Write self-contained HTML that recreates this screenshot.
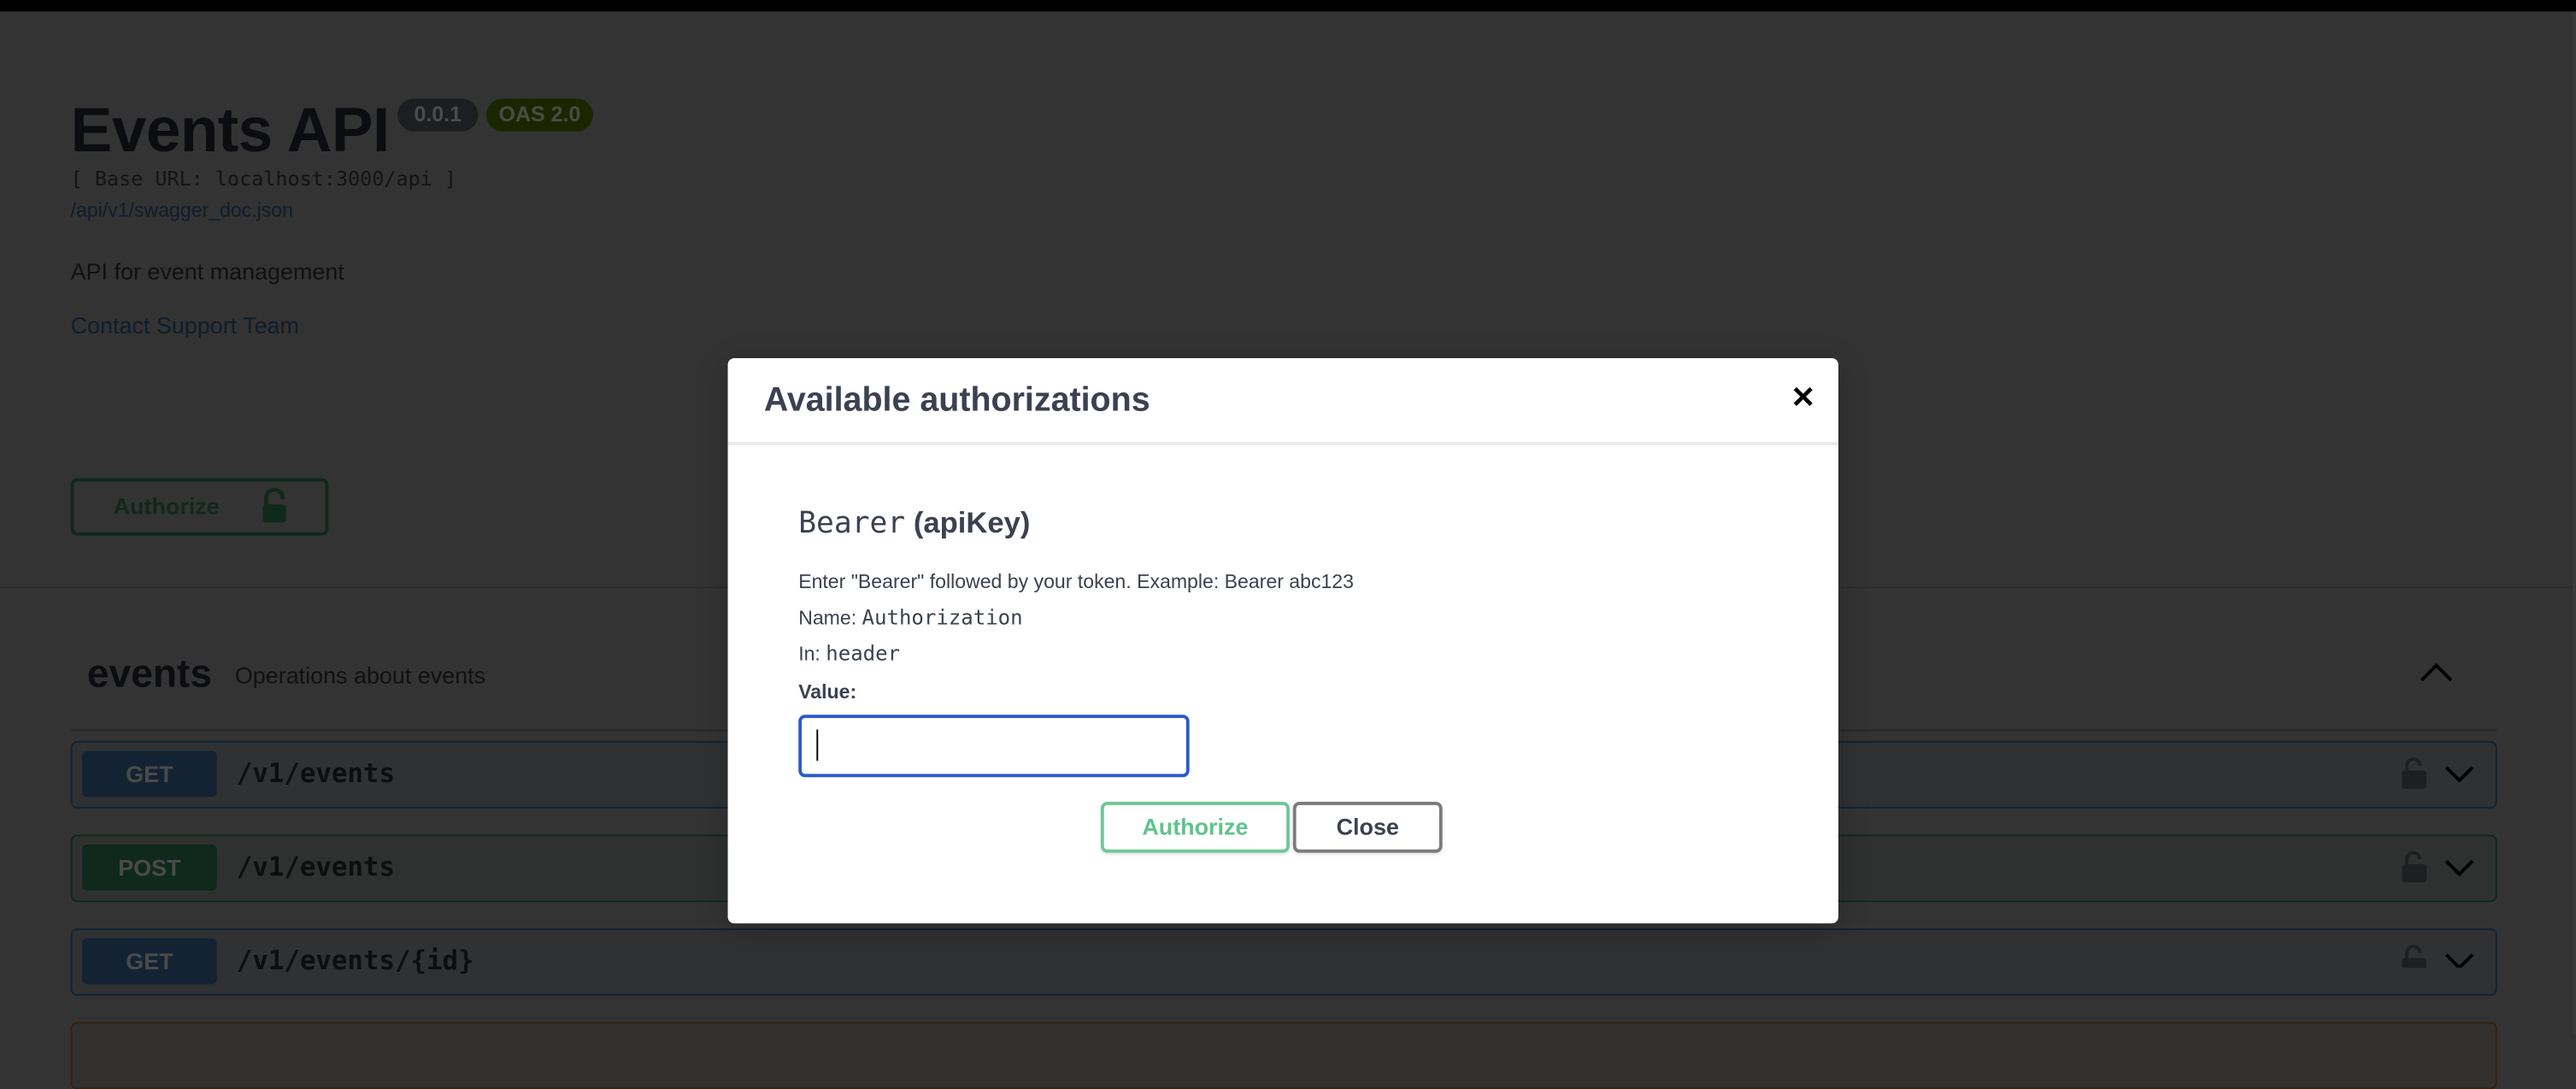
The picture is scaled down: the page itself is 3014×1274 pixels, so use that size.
<!DOCTYPE html>
<html><head><meta charset="utf-8">
<style>
html,body{margin:0;padding:0;width:3014px;height:1210px;overflow:hidden;background:#333;}
#w{position:absolute;left:0;top:0;width:1568px;height:630px;transform:scale(1.9222);transform-origin:0 0;font-family:"Liberation Sans",sans-serif;background:#333;}
.a{position:absolute;white-space:nowrap;}
.mono{font-family:"DejaVu Sans Mono","Liberation Mono",monospace;}
.op{position:absolute;left:43px;width:1475px;height:39px;border-radius:4px;background:#2f3132;}
.m{position:absolute;left:6px;top:5px;width:82px;height:28px;border-radius:3px;color:#4a4a4a;font-weight:bold;font-size:14px;text-align:center;line-height:28px;}
.p{position:absolute;left:100px;top:9px;font-family:"DejaVu Sans Mono","Liberation Mono",monospace;font-weight:bold;font-size:16px;color:#0d0e10;}
</style></head><body><div id="w">
<div class="a" style="left:0;top:0;width:1568px;height:7px;background:#000"></div>
<div class="a" style="left:43px;top:59px;font-size:38px;font-weight:bold;color:#0c0d10;letter-spacing:-0.3px">Events API</div>
<div class="a" style="left:242px;top:60px;width:49px;height:20px;border-radius:10px;background:#1c1e21;color:#4a4b4d;font-weight:bold;font-size:13px;line-height:20px;text-align:center">0.0.1</div>
<div class="a" style="left:296px;top:60px;width:65px;height:20px;border-radius:10px;background:#1b2601;color:#4a4b44;font-weight:bold;font-size:13px;line-height:20px;text-align:center">OAS 2.0</div>
<div class="a mono" style="left:43px;top:102px;font-size:12.2px;color:#141414">[ Base URL: localhost:3000/api ]</div>
<div class="a" style="left:43px;top:121px;font-size:12px;color:#0f1d2d">/api/v1/swagger_doc.json</div>
<div class="a" style="left:43px;top:157px;font-size:14px;color:#111">API for event management</div>
<div class="a" style="left:43px;top:190px;font-size:14px;color:#0f1d2d">Contact Support Team</div>
<div class="a" style="left:43px;top:291px;width:153px;height:31px;border:2px solid #0f291d;border-radius:4px"></div>
<div class="a" style="left:69px;top:300px;font-size:14px;font-weight:bold;color:#0f291d">Authorize</div>
<svg class="a" style="left:158px;top:297px" width="18" height="22" viewBox="0 0 18 22"><path d="M4 10V6a5 5 0 0 1 10 0v1" fill="none" stroke="#0f291d" stroke-width="2.4"/><rect x="2" y="10" width="14" height="11" rx="2" fill="#0f291d"/></svg>
<div class="a" style="left:0;top:357px;width:1568px;height:1px;background:#2e2e2e"></div>
<div class="a" style="left:53px;top:397px;font-size:24px;font-weight:bold;color:#0c0d10">events</div>
<div class="a" style="left:143px;top:403px;font-size:14px;color:#111">Operations about events</div>
<svg class="a" style="left:1472px;top:402px" width="22" height="14" viewBox="0 0 22 14"><path d="M2 12L11 3l9 9" fill="none" stroke="#000" stroke-width="2"/></svg>
<div class="a" style="left:43px;top:444px;width:1477px;height:1px;background:#2a2a2a"></div>

<div class="op" style="top:451px;border:1px solid #132333"><div class="m" style="background:#132333">GET</div><div class="p">/v1/events</div></div>
<div class="op" style="top:508px;border:1px solid #0f291d;background:#2e3130"><div class="m" style="background:#0f291d">POST</div><div class="p">/v1/events</div></div>
<div class="op" style="top:565px;border:1px solid #132333"><div class="m" style="background:#132333">GET</div><div class="p">/v1/events/{id}</div></div>
<div class="op" style="top:622px;border:1px solid #33230a;background:#333130"></div>
<svg class="a" style="left:1461px;top:459px" width="50" height="130" viewBox="0 0 50 130">
<g id="ic"><path d="M4 12V7a4 4 0 0 1 8 0" fill="none" stroke="#1e1f21" stroke-width="2"/><rect x="1" y="10" width="15" height="11" rx="2" fill="#1e1f21"/><path d="M28 8l8 8 8-8" fill="none" stroke="#000" stroke-width="2"/></g>
<use href="#ic" y="57"/><use href="#ic" y="114"/></svg>

<div class="a" style="left:443px;top:218px;width:676px;height:344px;background:#fff;border-radius:4px;box-shadow:0 4px 20px rgba(0,0,0,.2)"></div>
<div class="a" style="left:465px;top:232px;font-size:20.5px;font-weight:bold;color:#3b4151">Available authorizations</div>
<div class="a" style="left:1090px;top:232px;font-size:18px;font-weight:bold;color:#000">✕</div>
<div class="a" style="left:443px;top:269px;width:676px;height:2px;background:#ebebeb"></div>
<div class="a" style="left:486px;top:308px;font-size:18px;color:#3b4151"><span class="mono" style="font-size:18px">Bearer</span> <b>(apiKey)</b></div>
<div class="a" style="left:486px;top:347px;font-size:12px;color:#3b4151">Enter "Bearer" followed by your token. Example: Bearer abc123</div>
<div class="a" style="left:486px;top:368px;font-size:12px;color:#3b4151">Name: <span class="mono" style="font-size:12.5px">Authorization</span></div>
<div class="a" style="left:486px;top:390px;font-size:12px;color:#3b4151">In: <span class="mono" style="font-size:12.5px">header</span></div>
<div class="a" style="left:486px;top:414px;font-size:12px;font-weight:bold;color:#3b4151">Value:</div>
<div class="a" style="left:486px;top:435px;width:234px;height:34px;border:2px solid #2a5cc8;border-radius:4px"></div>
<div class="a" style="left:497px;top:444px;width:1px;height:19px;background:#000"></div>
<div class="a" style="left:670px;top:488px;width:111px;height:27px;border:2px solid #6fc896;border-radius:4px;box-shadow:0 1px 2px rgba(0,0,0,.1);color:#5fc48c;font-weight:bold;font-size:14px;text-align:center;line-height:27px">Authorize</div>
<div class="a" style="left:787px;top:488px;width:87px;height:27px;border:2px solid #7b7b7b;border-radius:4px;box-shadow:0 1px 2px rgba(0,0,0,.1);color:#3b4151;font-weight:bold;font-size:14px;text-align:center;line-height:27px">Close</div>
<div class="a" style="left:1566px;top:7px;width:2px;height:623px;background:#3a3a3a"></div>
</div></body></html>
